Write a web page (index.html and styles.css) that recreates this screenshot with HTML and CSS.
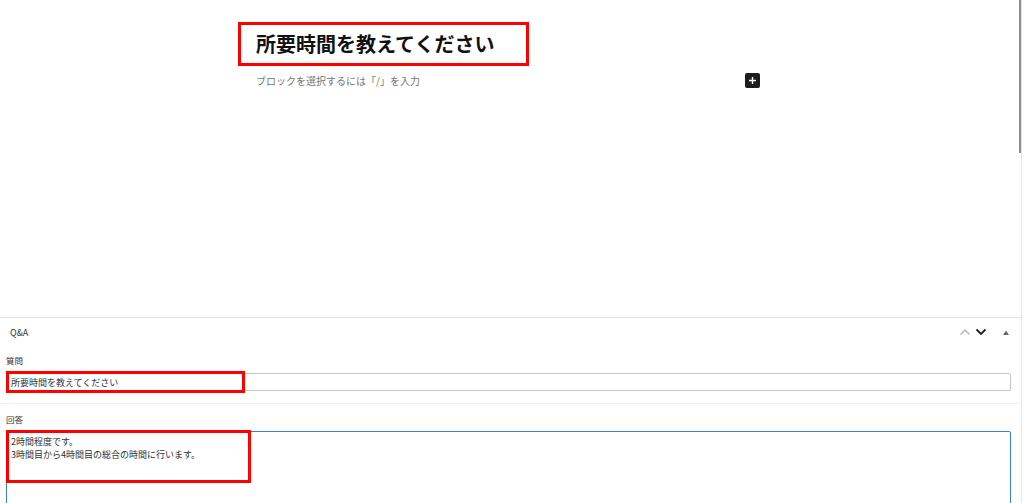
FILE: index.html
```html
<!DOCTYPE html>
<html lang="ja">
<head>
  <meta charset="UTF-8" />
  <meta name="viewport" content="width=device-width, initial-scale=1.0"/>
  <title>投稿を編集</title>
  <link rel="stylesheet" href="styles.css">
</head>
<body>
  <div class="editor">
    <div class="canvas">
      <h1 class="post-title">所要時間を教えてください</h1>
      <div class="placeholder-row">
        <span class="placeholder">ブロックを選択するには「/」を入力</span>
        <button class="inserter" aria-label="ブロックを追加">
          <svg width="9" height="9" viewBox="0 0 9 9"><path d="M4.5 1v7M1 4.5h7" stroke="#fff" stroke-width="1.4"/></svg>
        </button>
      </div>
    </div>
    <div class="metabox">
      <div class="metabox-head">
        <span class="metabox-title">Q&amp;A</span>
        <div class="controls">
          <svg width="12" height="8" viewBox="0 0 12 8"><path d="M1.5 6.5L6 2l4.5 4.5" fill="none" stroke="#b4b6b9" stroke-width="1.5"/></svg>
          <svg width="12" height="8" viewBox="0 0 12 8"><path d="M1.5 1.5L6 6l4.5-4.5" fill="none" stroke="#1e1e1e" stroke-width="1.8"/></svg>
          <svg class="toggle" width="6" height="5" viewBox="0 0 6 5"><path d="M0 5L3 0.5 6 5z" fill="#646970"/></svg>
        </div>
      </div>
      <div class="field">
        <label class="field-label" for="question">質問</label>
        <div class="field-wrap">
          <input class="text-input" id="question" type="text" value="所要時間を教えてください">
          <span class="mark mark-question"></span>
        </div>
      </div>
      <div class="field field-answer">
        <label class="field-label" for="answer">回答</label>
        <div class="field-wrap">
          <textarea class="text-area" id="answer">2時間程度です。
3時間目から4時間目の総合の時間に行います。</textarea>
          <span class="mark mark-answer"></span>
        </div>
      </div>
    </div>
    <div class="scrollbar"></div>
  </div>
</body>
</html>
```

FILE: styles.css
```css
html, body {
  margin: 0;
  padding: 0;
  overflow: hidden;
  background: #fff;
  font-family: 'Noto Sans CJK JP', 'Noto Sans', sans-serif;
  color: #1e1e1e;
}
.editor {
  position: relative;
  width: 1021px;
  height: 503px;
  overflow: hidden;
  border-right: 1px solid #e6e6e6;
}
.canvas {
  height: 318px;
  padding-top: 22px;
  box-sizing: border-box;
  border-bottom: 1px solid #e0e0e0;
}
.post-title {
  display: inline-block;
  margin: 0 0 0 238px;
  padding: 4px 32px 4px 15px;
  border: 3px solid #f00;
  font-size: 20px;
  line-height: 30px;
  font-weight: bold;
  color: #111;
}
.placeholder-row {
  display: flex;
  align-items: center;
  justify-content: space-between;
  width: 504px;
  height: 15px;
  margin: 7px 0 0 256px;
}
.placeholder {
  font-size: 10px;
  color: #757575;
}
.inserter {
  display: flex;
  align-items: center;
  justify-content: center;
  width: 15px;
  height: 15px;
  padding: 0;
  border: none;
  border-radius: 2px;
  background: #1e1e1e;
}
.metabox-head {
  display: flex;
  align-items: center;
  justify-content: space-between;
  height: 28px;
  padding: 0 12px 0 10px;
}
.metabox-title {
  font-size: 9px;
  color: #333;
}
.controls {
  display: flex;
  align-items: center;
  gap: 4px;
}
.controls .toggle {
  margin-left: 12px;
}
.field {
  padding: 8px 10px 12px 6px;
}
.field-answer {
  border-top: 1px solid #f0f0f0;
  padding-top: 9px;
}
.field-label {
  display: block;
  font-size: 8.5px;
  line-height: 12px;
  color: #333;
  margin-bottom: 7px;
}
.field-answer .field-label {
  margin-bottom: 6px;
}
.field-wrap {
  position: relative;
}
.text-input, .text-area {
  display: block;
  width: 100%;
  box-sizing: border-box;
  margin: 0;
  font-family: inherit;
  font-size: 9px;
  color: #2c3338;
  background: #fff;
  outline: none;
}
.text-input {
  height: 18px;
  padding: 0 4px;
  border: 1px solid #c3c4c7;
  border-radius: 2px;
}
.text-area {
  height: 90px;
  padding: 3px 4px;
  line-height: 13px;
  border: 1px solid #3582c4;
  border-radius: 2px;
  resize: none;
}
.mark {
  position: absolute;
  left: 0;
  border: 3px solid #f00;
  box-sizing: border-box;
  pointer-events: none;
}
.mark-question {
  top: -2px;
  width: 239px;
  height: 22px;
}
.mark-answer {
  top: -1px;
  width: 245px;
  height: 53px;
}
.scrollbar {
  position: absolute;
  top: 0;
  right: 0;
  width: 2px;
  height: 153px;
  background: #8d8d8d;
}
```
